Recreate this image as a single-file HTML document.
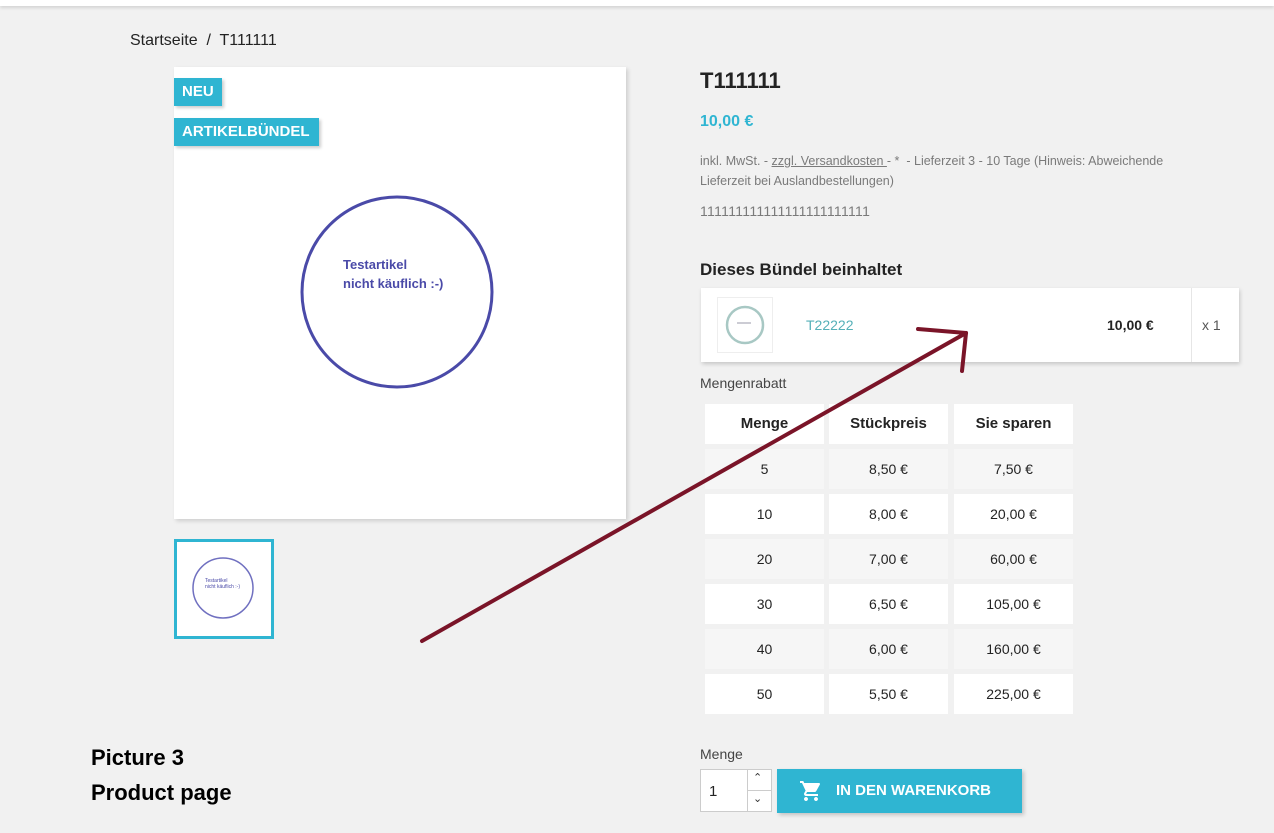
<!DOCTYPE html>
<html><head><meta charset="utf-8"><style>
body{margin:0;width:1274px;height:833px;background:#f1f1f1;font-family:"Liberation Sans","DejaVu Sans",sans-serif;position:relative;overflow:hidden;color:#232323}
.a{position:absolute}
.top{left:0;top:0;width:1274px;height:6px;background:#fff;box-shadow:0 2px 3px rgba(0,0,0,.12)}
.badge{background:#2fb5d2;color:#fff;font-weight:bold;font-size:15px;padding:0 8px;height:28px;line-height:28px;box-shadow:2px 2px 3px rgba(0,0,0,.2)}
.cell{position:absolute;width:119px;height:40px;line-height:40px;text-align:center;font-size:14px;color:#232323}
.w{background:#fff}.g{background:#f6f6f6}
.h{font-weight:bold;font-size:15px}
</style></head><body>
<div class="a top"></div>
<div class="a" style="left:130px;top:32px;font-size:16px;color:#232323">Startseite &nbsp;/&nbsp; T111111</div>
<div class="a" style="left:174px;top:67px;width:452px;height:452px;background:#fff;box-shadow:2px 2px 4px rgba(0,0,0,.15)"></div>
<svg class="a" style="left:174px;top:67px" width="452" height="452"><circle cx="223" cy="225" r="95" fill="none" stroke="#4a4aa8" stroke-width="3"/><text x="169" y="202" font-size="13" font-weight="bold" fill="#4a4aa8" font-family="Liberation Sans">Testartikel</text><text x="169" y="221" font-size="13" font-weight="bold" fill="#4a4aa8" font-family="Liberation Sans">nicht käuflich :-)</text></svg>
<div class="a badge" style="left:174px;top:78px">NEU</div>
<div class="a badge" style="left:174px;top:118px;padding:0 9px 0 8px">ARTIKELBÜNDEL</div>
<div class="a" style="left:174px;top:539px;width:94px;height:94px;border:3px solid #2fb5d2;background:#fff"></div>
<svg class="a" style="left:177px;top:542px" width="94" height="94"><circle cx="46" cy="46" r="30" fill="none" stroke="#7070c0" stroke-width="1.5"/><text x="28" y="40" font-size="5" fill="#4a4aa8">Testartikel</text><text x="28" y="46" font-size="5" fill="#4a4aa8">nicht käuflich :-)</text></svg>
<div class="a" style="left:700px;top:68px;font-size:22px;font-weight:bold">T111111</div>
<div class="a" style="left:700px;top:113px;font-size:16px;font-weight:bold;color:#2fb5d2">10,00 €</div>
<div class="a" style="left:700px;top:151px;width:505px;font-size:12.5px;line-height:20px;color:#7a7a7a">inkl. MwSt. - <u>zzgl. Versandkosten </u>- * &nbsp;- Lieferzeit 3 - 10 Tage (Hinweis: Abweichende Lieferzeit bei Auslandbestellungen)</div>
<div class="a" style="left:700px;top:203px;font-size:14px;color:#7a7a7a;letter-spacing:.3px">111111111111111111111111</div>
<div class="a" style="left:700px;top:260px;font-size:17px;font-weight:bold">Dieses Bündel beinhaltet</div>
<div class="a" style="left:701px;top:288px;width:538px;height:74px;background:#fff;box-shadow:1px 2px 4px rgba(0,0,0,.18)"></div>
<div class="a" style="left:1191px;top:288px;width:1px;height:74px;background:#e6e6e6"></div>
<div class="a" style="left:717px;top:297px;width:54px;height:54px;border:1px solid #eee;background:#fff"></div>
<svg class="a" style="left:717px;top:297px" width="56" height="56"><circle cx="28" cy="28" r="18" fill="none" stroke="#a8c8c4" stroke-width="2.5"/><line x1="20" y1="26" x2="34" y2="26" stroke="#99a" stroke-width="1"/></svg>
<div class="a" style="left:806px;top:317px;font-size:14px;color:#55b0b8">T22222</div>
<div class="a" style="left:1107px;top:317px;font-size:14px;font-weight:bold">10,00 €</div>
<div class="a" style="left:1202px;top:317px;font-size:14px;color:#555">x 1</div>
<div class="a" style="left:700px;top:375px;font-size:14px;color:#444">Mengenrabatt</div>
<div class="cell w h" style="left:705px;top:404px">Menge</div><div class="cell w h" style="left:829px;top:404px">Stückpreis</div><div class="cell w h" style="left:954px;top:404px">Sie sparen</div>
<div class="cell g" style="left:705px;top:449px">5</div><div class="cell g" style="left:829px;top:449px">8,50 €</div><div class="cell g" style="left:954px;top:449px">7,50 €</div>
<div class="cell w" style="left:705px;top:494px">10</div><div class="cell w" style="left:829px;top:494px">8,00 €</div><div class="cell w" style="left:954px;top:494px">20,00 €</div>
<div class="cell g" style="left:705px;top:539px">20</div><div class="cell g" style="left:829px;top:539px">7,00 €</div><div class="cell g" style="left:954px;top:539px">60,00 €</div>
<div class="cell w" style="left:705px;top:584px">30</div><div class="cell w" style="left:829px;top:584px">6,50 €</div><div class="cell w" style="left:954px;top:584px">105,00 €</div>
<div class="cell g" style="left:705px;top:629px">40</div><div class="cell g" style="left:829px;top:629px">6,00 €</div><div class="cell g" style="left:954px;top:629px">160,00 €</div>
<div class="cell w" style="left:705px;top:674px">50</div><div class="cell w" style="left:829px;top:674px">5,50 €</div><div class="cell w" style="left:954px;top:674px">225,00 €</div>
<svg class="a" style="left:0;top:0" width="1274" height="833"><g stroke="#7a1428" stroke-width="4" stroke-linecap="round" fill="none"><line x1="422" y1="641" x2="966" y2="333"/><line x1="918" y1="329" x2="966" y2="333"/><line x1="966" y1="333" x2="962" y2="371"/></g></svg>
<div class="a" style="left:91px;top:740px;font-size:22px;font-weight:bold;line-height:35px;color:#000">Picture 3<br>Product page</div>
<div class="a" style="left:700px;top:746px;font-size:14px;color:#444">Menge</div>
<div class="a" style="left:700px;top:769px;width:72px;height:43px;background:#fff;border:1px solid #ccc;box-sizing:border-box"></div>
<div class="a" style="left:709px;top:783px;font-size:15px">1</div>
<div class="a" style="left:747px;top:769px;width:1px;height:43px;background:#ccc"></div>
<div class="a" style="left:747px;top:790px;width:25px;height:1px;background:#ccc"></div>
<div class="a" style="left:753px;top:771px;font-size:11px;color:#333">&#8963;</div>
<div class="a" style="left:753px;top:792px;font-size:11px;color:#333">&#8964;</div>
<div class="a" style="left:777px;top:769px;width:245px;height:44px;background:#2fb5d2;box-shadow:2px 2px 4px rgba(0,0,0,.2)"></div>
<svg class="a" style="left:799px;top:779px" width="24" height="24" viewBox="0 0 24 24"><path fill="#fff" d="M7 18c-1.1 0-2 .9-2 2s.9 2 2 2 2-.9 2-2-.9-2-2-2zM1 2v2h2l3.6 7.59-1.35 2.450C5.09 14.32 5 14.65 5 15c0 1.1.9 2 2 2h12v-2H7.42c-.14 0-.25-.11-.25-.25l.03-.12.9-1.63h7.45c.75 0 1.410-.41 1.75-1.03l3.58-6.49A1 1 0 0 0 20 4H5.21l-.94-2H1zm16 16c-1.1 0-2 .9-2 2s.9 2 2 2 2-.9 2-2-.9-2-2-2z"/></svg>
<div class="a" style="left:836px;top:782px;font-size:15px;font-weight:bold;color:#fff">IN DEN WARENKORB</div>
</body></html>
